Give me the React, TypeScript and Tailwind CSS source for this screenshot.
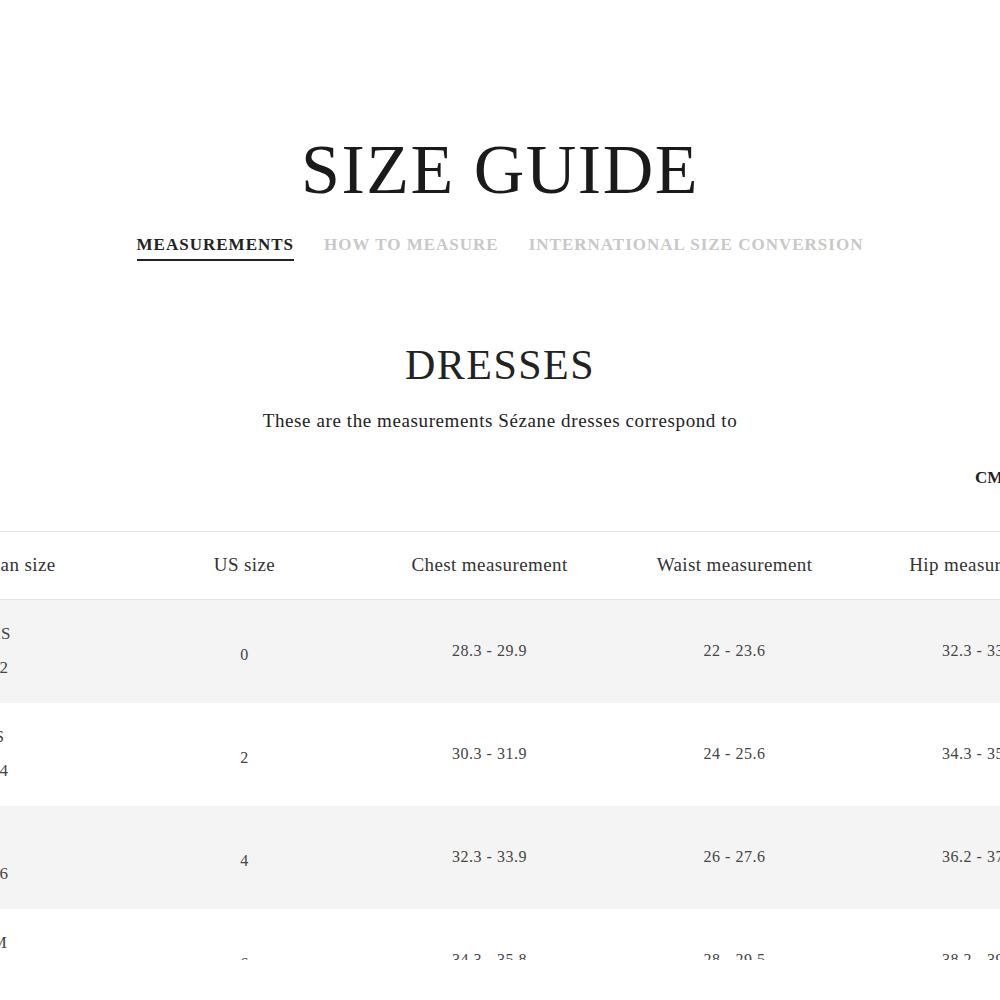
const rows = [
  { eu: ["XS", "32"], us: "0", chest: "28.3 - 29.9", waist: "22 - 23.6", hip: "32.3 - 33.9" },
  { eu: ["S", "34"], us: "2", chest: "30.3 - 31.9", waist: "24 - 25.6", hip: "34.3 - 35.9" },
  { eu: ["", "36"], us: "4", chest: "32.3 - 33.9", waist: "26 - 27.6", hip: "36.2 - 37.8" },
  { eu: ["M", "38"], us: "6", chest: "34.3 - 35.8", waist: "28 - 29.5", hip: "38.2 - 39.8" },
];

const App = () => {
  return (
    <div className="w-[1000px] h-[1000px] bg-white overflow-hidden text-[#222]" style={{ fontFamily: '"Liberation Serif", serif' }}>
      <div className="h-[960px] overflow-hidden">
        <h1 className="pt-[130px] text-center text-[70px] leading-[80px] tracking-[1.5px] text-[#1a1a1a]">SIZE GUIDE</h1>

        {/* Tabs */}
        <div className="mt-[22px] flex justify-center gap-[30px] text-[17px] font-bold tracking-[1px] uppercase">
          <span className="border-b-2 border-[#222] pb-[1px]">Measurements</span>
          <span className="text-[#c8c8c8]">How to measure</span>
          <span className="text-[#c8c8c8]">International size conversion</span>
        </div>

        <h2 className="mt-[80px] text-center text-[42px] leading-[48px] tracking-[1.5px]">DRESSES</h2>
        <p className="mt-[18px] text-center text-[19px] tracking-[0.6px]">These are the measurements Sézane dresses correspond to</p>

        <div className="mt-[30px] flex pl-[975px] text-[17px] font-bold whitespace-nowrap">CM</div>

        {/* Table */}
        <div className="mt-[40px] ml-[-123px] w-[1225px] border-t border-[#e3e3e3]">
          <div className="grid grid-cols-[245px_245px_245px_245px_245px] h-[68px] items-center border-b border-[#e3e3e3] text-[19px] tracking-[0.4px] text-[#333] whitespace-nowrap">
            <div className="text-center">European size</div>
            <div className="text-center">US size</div>
            <div className="text-center">Chest measurement</div>
            <div className="text-center">Waist measurement</div>
            <div className="text-center">Hip measurement</div>
          </div>
          {rows.map((r, i) => (
            <div
              key={i}
              className={`grid grid-cols-[245px_245px_245px_245px_245px] h-[103px] items-center text-[16px] tracking-[0.5px] text-[#444] ${i % 2 === 0 ? "bg-[#f4f4f4]" : "bg-white"}`}
            >
              <div className="flex flex-col items-center gap-[12px] text-[17px] leading-[22px]">
                <span className="h-[22px]">{r.eu[0]}</span>
                <span>{r.eu[1]}</span>
              </div>
              <div className="text-center pt-[8px]">{r.us}</div>
              <div className="text-center">{r.chest}</div>
              <div className="text-center">{r.waist}</div>
              <div className="text-center">{r.hip}</div>
            </div>
          ))}
        </div>
      </div>
    </div>
  );
};

export default App;
